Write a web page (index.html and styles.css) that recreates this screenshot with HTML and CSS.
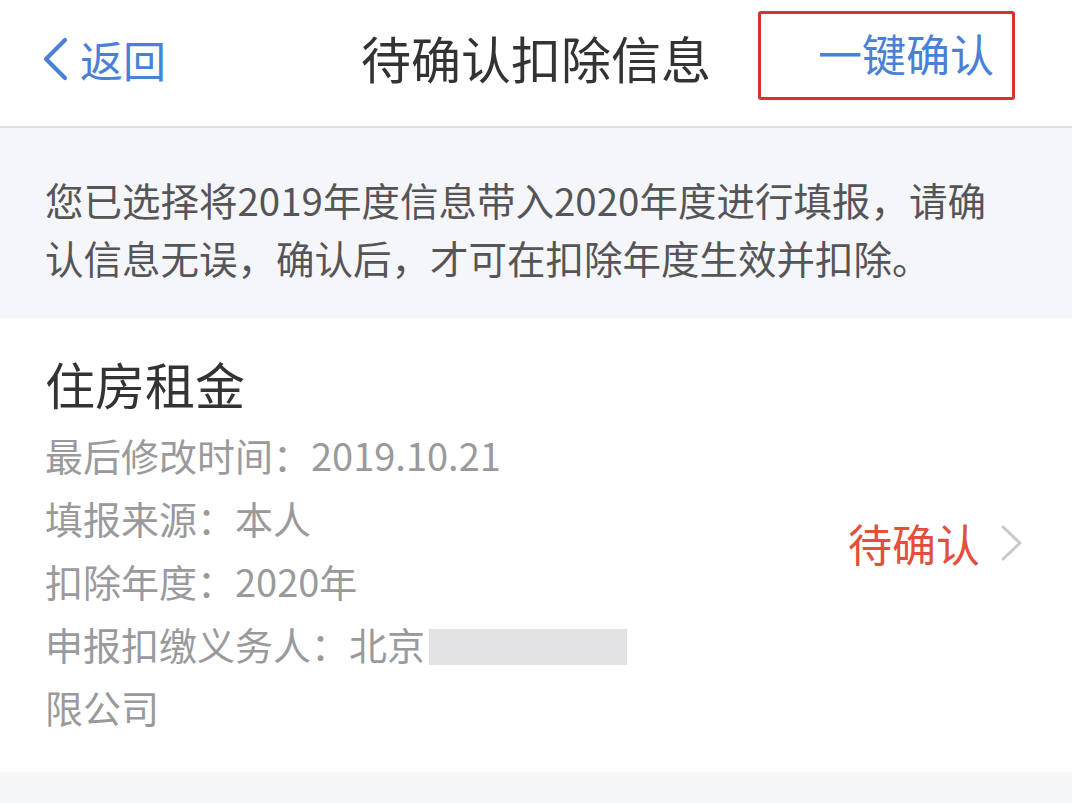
FILE: index.html
```html
<!DOCTYPE html>
<html lang="zh-CN">
<head>
<meta charset="utf-8">
<title>待确认扣除信息</title>
<link rel="stylesheet" href="styles.css">
</head>
<body>
<div class="page">
  <header class="topbar">
    <div class="back">
      <svg class="back-icon" width="28" height="44" viewBox="0 0 28 44"><polyline points="24,3 5,22 24,41" fill="none" stroke="#4a80d6" stroke-width="4.2" stroke-linecap="round" stroke-linejoin="round"/></svg>
      <span class="back-text">返回</span>
    </div>
    <h1 class="title">待确认扣除信息</h1>
    <div class="action-wrap">
      <div class="action">一键确认</div>
    </div>
  </header>
  <section class="notice">您已选择将2019年度信息带入2020年度进行填报，请确认信息无误，确认后，才可在扣除年度生效并扣除。</section>
  <section class="card">
    <div class="card-body">
      <div class="card-title">住房租金</div>
      <div class="line">最后修改时间：2019.10.21</div>
      <div class="line">填报来源：本人</div>
      <div class="line">扣除年度：2020年</div>
      <div class="line">申报扣缴义务人：北京<span class="blur"></span></div>
      <div class="line">限公司</div>
    </div>
    <div class="status">
      <span class="status-text">待确认</span>
      <svg class="chev" width="24" height="38" viewBox="0 0 24 38"><polyline points="3,3 20,19 3,35" fill="none" stroke="#c9c9cc" stroke-width="3" stroke-linecap="round" stroke-linejoin="round"/></svg>
    </div>
  </section>
  <div class="rest"></div>
</div>
</body>
</html>
```

FILE: styles.css
```css
* { box-sizing: border-box; }
html, body { margin: 0; padding: 0; }
body {
  font-family: "Noto Sans CJK SC", "Roboto", "Noto Sans", sans-serif;
  background: #f6f7f9;
  width: 1072px;
  height: 803px;
  overflow: hidden;
}
.page { width: 1072px; }
.topbar {
  height: 128px;
  background: #fff;
  border-bottom: 2px solid #dedfe2;
  display: grid;
  grid-template-columns: 1fr auto 1fr;
  align-items: start;
}
.back {
  display: flex;
  align-items: center;
  padding-left: 41px;
  height: 118px;
  gap: 11px;
  color: #4a80d6;
}
.back-icon { display: block; }
.back-text { font-size: 43px; line-height: 1; }
.title {
  margin: 0;
  font-weight: 400;
  font-size: 50px;
  color: #333;
  line-height: 114px;
  letter-spacing: 0;
}
.action-wrap {
  display: flex;
  justify-content: flex-end;
  padding-right: 57px;
  padding-top: 11px;
}
.action {
  width: 257px;
  height: 89px;
  border: 3px solid #d8322e;
  border-radius: 3px;
  color: #4a80d6;
  font-size: 44px;
  line-height: 1;
  display: flex;
  align-items: center;
  justify-content: flex-end;
  padding-right: 18px;
  padding-bottom: 6px;
}
.notice {
  background: #f5f6fa;
  padding: 42px 66px 32px 45px;
  font-size: 38.5px;
  line-height: 58px;
  color: #555558;
  height: 190px;
}
.card {
  background: #fff;
  display: flex;
  align-items: center;
  justify-content: space-between;
  padding: 30px 48px 34px 45px;
}
.card-title {
  font-size: 50px;
  line-height: 70px;
  color: #333;
  margin-bottom: 5px;
}
.line {
  font-size: 38px;
  line-height: 63px;
  color: #9a9a9d;
  display: flex;
  align-items: center;
}
.blur {
  display: inline-block;
  width: 198px;
  height: 36px;
  background: #e3e3e5;
  margin-top: 6px;
  margin-left: 4px;
}
.status {
  display: flex;
  align-items: center;
  gap: 20px;
}
.status-text {
  font-size: 44px;
  color: #e24f3c;
}
.chev { display: block; }
.rest { height: 40px; background: #f6f7f9; }
```
